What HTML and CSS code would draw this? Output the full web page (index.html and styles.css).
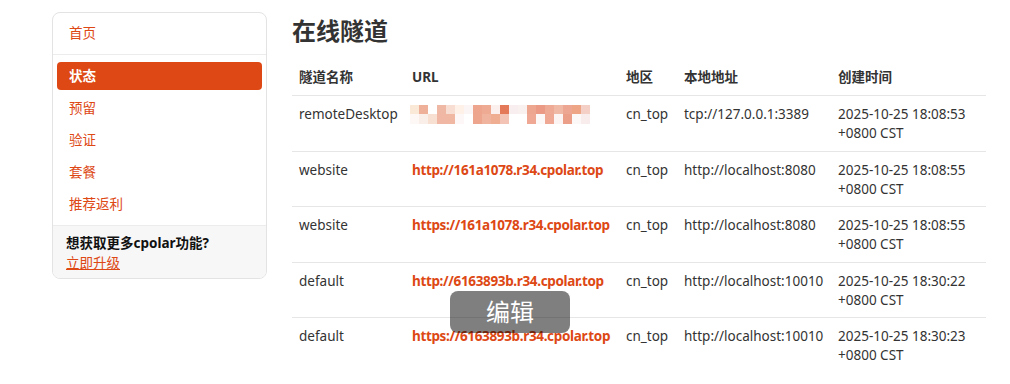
FILE: index.html
```html
<!DOCTYPE html>
<html lang="zh-CN">
<head>
    <meta charset="UTF-8">
    <meta name="viewport" content="width=device-width, initial-scale=1.0">
    <title>cpolar - 在线隧道</title>
    <link rel="stylesheet" href="styles.css">
</head>
<body>
    <div class="page">
        <aside class="sidebar">
            <div class="nav-home"><a href="#">首页</a></div>
            <ul class="nav-list">
                <li class="active"><a href="#">状态</a></li>
                <li><a href="#">预留</a></li>
                <li><a href="#">验证</a></li>
                <li><a href="#">套餐</a></li>
                <li><a href="#">推荐返利</a></li>
            </ul>
            <div class="upgrade">
                <p class="upgrade-title">想获取更多cpolar功能?</p>
                <a href="#" class="upgrade-link">立即升级</a>
            </div>
        </aside>

        <main class="content">
            <h1>在线隧道</h1>
            <table class="tunnels">
                <colgroup>
                    <col class="col-name">
                    <col class="col-url">
                    <col class="col-region">
                    <col class="col-local">
                    <col class="col-time">
                </colgroup>
                <thead>
                    <tr>
                        <th>隧道名称</th>
                        <th>URL</th>
                        <th>地区</th>
                        <th>本地地址</th>
                        <th>创建时间</th>
                    </tr>
                </thead>
                <tbody>
                    <tr>
                        <td>remoteDesktop</td>
                        <td><span class="mosaic"></span></td>
                        <td>cn_top</td>
                        <td>tcp://127.0.0.1:3389</td>
                        <td>2025-10-25 18:08:53<br>+0800 CST</td>
                    </tr>
                    <tr>
                        <td>website</td>
                        <td><a href="#">http://161a1078.r34.cpolar.top</a></td>
                        <td>cn_top</td>
                        <td>http://localhost:8080</td>
                        <td>2025-10-25 18:08:55<br>+0800 CST</td>
                    </tr>
                    <tr>
                        <td>website</td>
                        <td><a href="#">https://161a1078.r34.cpolar.top</a></td>
                        <td>cn_top</td>
                        <td>http://localhost:8080</td>
                        <td>2025-10-25 18:08:55<br>+0800 CST</td>
                    </tr>
                    <tr>
                        <td>default</td>
                        <td><a href="#">http://6163893b.r34.cpolar.top</a></td>
                        <td>cn_top</td>
                        <td>http://localhost:10010</td>
                        <td>2025-10-25 18:30:22<br>+0800 CST</td>
                    </tr>
                    <tr>
                        <td>default</td>
                        <td><a href="#">https://6163893b.r34.cpolar.top</a></td>
                        <td>cn_top</td>
                        <td>http://localhost:10010</td>
                        <td>2025-10-25 18:30:23<br>+0800 CST</td>
                    </tr>
                </tbody>
            </table>
        </main>
    </div>

    <div class="toast">编辑</div>
</body>
</html>
```

FILE: styles.css
```css
:root {
    --orange: #dd4814;
    --text: #333333;
    --border: #e6e6e6;
    --panel-bg: #f7f7f7;
}

* {
    margin: 0;
    padding: 0;
    box-sizing: border-box;
}

body {
    font-family: "Noto Sans", "Noto Sans CJK SC", sans-serif;
    font-size: 13.5px;
    line-height: 19px;
    color: var(--text);
    background: #fff;
}

a {
    color: var(--orange);
    text-decoration: none;
}

.page {
    display: flex;
    align-items: flex-start;
    gap: 25px;
    padding: 12px 0 0 52px;
}

/* sidebar */
.sidebar {
    width: 215px;
    flex-shrink: 0;
    border: 1px solid #e3e3e3;
    border-radius: 8px;
    overflow: hidden;
}

.nav-home {
    padding: 11px 16px 11px 16px;
    border-bottom: 1px solid #ececec;
}

.nav-list {
    list-style: none;
    padding: 7px 4px 3px;
}

.nav-list li {
    margin-bottom: 4px;
}

.nav-list a {
    display: block;
    height: 28px;
    line-height: 28px;
    padding: 0 12px;
    border-radius: 4px;
}

.nav-list li.active a {
    background: var(--orange);
    color: #fff;
    font-weight: bold;
}

.upgrade {
    background: var(--panel-bg);
    border-top: 1px solid #ececec;
    padding: 8px 13px 4px;
}

.upgrade-title {
    font-weight: bold;
    color: #111;
    line-height: 19px;
}

.upgrade-link {
    text-decoration: underline;
    line-height: 21px;
}

/* content */
.content {
    width: 694px;
}

h1 {
    font-size: 24px;
    line-height: 32px;
    font-weight: bold;
    color: var(--text);
    margin-top: 3px;
    margin-bottom: 12px;
}

.tunnels {
    width: 100%;
    border-collapse: collapse;
    table-layout: fixed;
}

.col-name { width: 113px; }
.col-url { width: 214px; }
.col-region { width: 58px; }
.col-local { width: 154px; }
.col-time { width: 155px; }

.tunnels th,
.tunnels td {
    text-align: left;
    vertical-align: top;
    padding: 9px 7px 7.5px 7px;
    white-space: nowrap;
}

.tunnels th {
    font-weight: bold;
    padding-bottom: 8px;
    border-bottom: 1px solid var(--border);
}

.tunnels tbody tr + tr td {
    border-top: 1px solid var(--border);
}

.tunnels td a {
    font-weight: bold;
    letter-spacing: -0.35px;
}

/* pixelated (hidden) url */
.mosaic {
    display: block;
    width: 180px;
    height: 19px;
    margin-left: -2px;
    background:
        linear-gradient(to right,
            #fbe9d8 0 9px, #efb09a 9px 18px, #ffffff 18px 27px, #efb8a5 27px 36px,
            #f8ddd3 36px 45px, #fdf1e8 45px 54px, #fbf5f5 54px 63px, #eea58e 63px 72px,
            #eeaa92 72px 81px, #fbf0ee 81px 90px, #e4795a 90px 99px, #f8eeef 99px 108px,
            #f9f0f0 108px 117px, #eda690 117px 126px, #ea9a85 126px 135px, #eeaa94 135px 144px,
            #f0b9a6 144px 153px, #eca692 153px 162px, #eea585 162px 171px, #f4cfc5 171px 180px)
            top left / 100% 9px no-repeat,
        linear-gradient(to right,
            #fdf8f5 0 9px, #faeee8 9px 18px, #f7dfd2 18px 27px, #f0b8a4 27px 36px,
            #f0b7a3 36px 45px, #fdf7f7 45px 54px, #ffffff 54px 63px, #eea58e 63px 72px,
            #f0b49e 72px 81px, #efae92 81px 90px, #f3c4b6 90px 99px, #ffffff 99px 108px,
            #ffffff 108px 117px, #eea893 117px 126px, #fdf8f8 126px 135px, #eea893 135px 144px,
            #fcf3f3 144px 153px, #eb9f88 153px 162px, #fdf8f8 162px 171px, #f9ecec 171px 180px)
            left 9px / 100% 10px no-repeat;
}

/* floating toast */
.toast {
    position: absolute;
    left: 450px;
    top: 291px;
    width: 120px;
    height: 42px;
    border-radius: 8px;
    background: rgba(0, 0, 0, 0.5);
    color: #fff;
    font-size: 24px;
    line-height: 42px;
    text-align: center;
}
```
